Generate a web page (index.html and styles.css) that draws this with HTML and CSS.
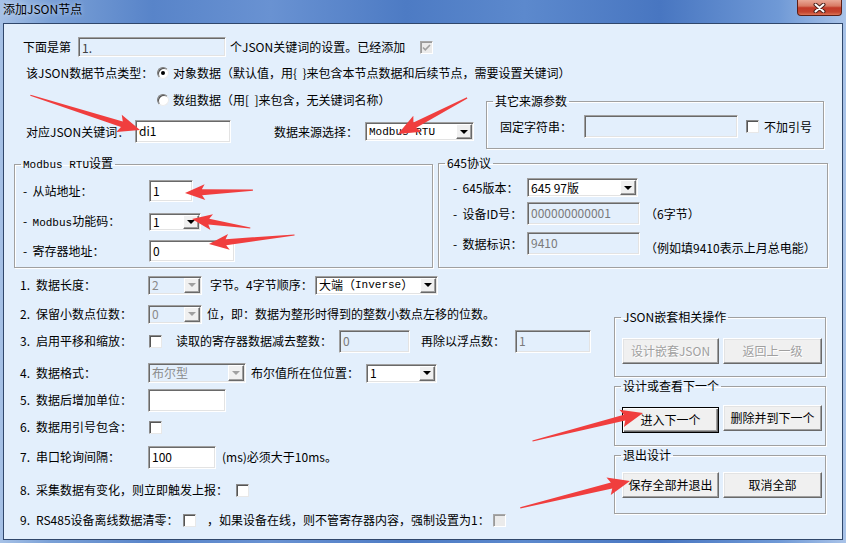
FILE: index.html
```html
<!DOCTYPE html>
<html lang="zh-CN">
<head>
    <meta charset="UTF-8">
    <title>添加JSON节点</title>
    <link rel="stylesheet" href="styles.css">
</head>
<body>
<div class="window">
    <div class="titlebar">
        <span class="title">添加JSON节点</span>
        <div class="close">
            <svg width="13" height="10" viewBox="0 0 13 10">
                <path d="M2.5 1.5 L10.5 8.5 M10.5 1.5 L2.5 8.5" stroke="#4a1f18" stroke-width="4" stroke-linecap="round"/>
                <path d="M2.5 1.5 L10.5 8.5 M10.5 1.5 L2.5 8.5" stroke="#fff" stroke-width="2" stroke-linecap="round"/>
            </svg>
        </div>
    </div>

    <div class="client">
        <div class="row head-row">
            <span class="lbl w55">下面是第</span>
            <div class="edit off dark w148 h20">1.</div>
            <span class="lbl w190 ml4">个JSON关键词的设置。已经添加</span>
            <span class="check off">
                <svg width="11" height="11" viewBox="0 0 11 11"><path d="M2 5.5 L4.3 7.8 L9 3" fill="none" stroke="#a0a0a0" stroke-width="1.6"/></svg>
            </span>
        </div>

        <div class="row type-row">
            <span class="lbl w131">该JSON数据节点类型：</span>
            <span class="radio on"></span>
            <span class="radio-text">对象数据（默认值，用{&nbsp;&nbsp;}来包含本节点数据和后续节点，需要设置关键词）</span>
        </div>

        <div class="top-split">
            <div class="top-left">
                <div class="row array-row">
                    <span class="radio"></span>
                    <span class="radio-text">数组数据（用[&nbsp;&nbsp;]来包含，无关键词名称）</span>
                </div>
                <div class="row key-row">
                    <span class="lbl w109">对应JSON关键词：</span>
                    <div class="edit w96 h23">di1</div>
                    <span class="lbl w91 ml43">数据来源选择：</span>
                    <div class="combo w109 h19"><span class="val latin">Modbus RTU</span><span class="drop"></span></div>
                </div>
            </div>
            <fieldset class="group other-src">
                <legend>其它来源参数</legend>
                <div class="row">
                    <span class="lbl w84">固定字符串：</span>
                    <div class="edit off w154 h23"></div>
                    <span class="check ml8"></span>
                    <span class="lbl ml5">不加引号</span>
                </div>
            </fieldset>
        </div>

        <div class="mid-split">
            <fieldset class="group modbus">
                <legend><span class="latin">Modbus RTU</span>设置</legend>
                <div class="row">
                    <span class="lbl w126">-&nbsp; 从站地址：</span>
                    <div class="edit w44 h22">1</div>
                </div>
                <div class="row gap11">
                    <span class="lbl w126">-&nbsp; <span class="latin">Modbus</span>功能码：</span>
                    <div class="combo w52 h18"><span class="val">1</span><span class="drop"></span></div>
                </div>
                <div class="row gap9">
                    <span class="lbl w126">-&nbsp; 寄存器地址：</span>
                    <div class="edit w86 h22">0</div>
                </div>
            </fieldset>
            <fieldset class="group proto645">
                <legend>645协议</legend>
                <div class="row">
                    <span class="lbl w74">-&nbsp; 645版本：</span>
                    <div class="combo w111 h19"><span class="val">645 97版</span><span class="drop"></span></div>
                </div>
                <div class="row gap5">
                    <span class="lbl w74">-&nbsp; 设备ID号：</span>
                    <div class="edit off w113 h23">000000000001</div>
                    <span class="lbl ml5">（6字节）</span>
                </div>
                <div class="row gap7">
                    <span class="lbl w74">-&nbsp; 数据标识：</span>
                    <div class="edit off w113 h23">9410</div>
                    <span class="lbl ml5 low">（例如填9410表示上月总电能）</span>
                </div>
            </fieldset>
        </div>

        <div class="bottom-split">
            <div class="options">
                <div class="row opt mt5">
                    <span class="num">1.</span><span class="lbl w112">数据长度：</span>
                    <div class="combo off w54 h19"><span class="val">2</span><span class="drop"></span></div>
                    <span class="lbl w105 ml8">字节。4字节顺序：</span>
                    <div class="combo w123 h19"><span class="val">大端（<span class="latin">Inverse</span>）</span><span class="drop"></span></div>
                </div>
                <div class="row opt mt5">
                    <span class="num">2.</span><span class="lbl w112">保留小数点位数：</span>
                    <div class="combo off w54 h19"><span class="val">0</span><span class="drop"></span></div>
                    <span class="lbl ml5">位，即：数据为整形时得到的整数小数点左移的位数。</span>
                </div>
                <div class="row opt mt3">
                    <span class="num">3.</span><span class="lbl w112">启用平移和缩放：</span>
                    <span class="check ml1"></span>
                    <span class="lbl w163 ml14">读取的寄存器数据减去整数：</span>
                    <div class="edit off w71 h23">0</div>
                    <span class="lbl w94 ml11">再除以浮点数：</span>
                    <div class="edit off w76 h23">1</div>
                </div>
                <div class="row opt mt8">
                    <span class="num">4.</span><span class="lbl w112">数据格式：</span>
                    <div class="combo off w98 h20"><span class="val">布尔型</span><span class="drop"></span></div>
                    <span class="lbl w115 ml5">布尔值所在位位置：</span>
                    <div class="combo w71 h19"><span class="val">1</span><span class="drop"></span></div>
                </div>
                <div class="row opt mt3">
                    <span class="num">5.</span><span class="lbl w112">数据后增加单位：</span>
                    <div class="edit w78 h23"></div>
                </div>
                <div class="row opt mt3">
                    <span class="num">6.</span><span class="lbl w112">数据用引号包含：</span>
                    <span class="check ml1"></span>
                </div>
                <div class="row opt mt6">
                    <span class="num">7.</span><span class="lbl w112">串口轮询间隔：</span>
                    <div class="edit w68 h23">100</div>
                    <span class="lbl ml6">(ms)必须大于10ms。</span>
                </div>
                <div class="row opt mt9">
                    <span class="num">8.</span><span class="lbl w200">采集数据有变化，则立即触发上报：</span>
                    <span class="check"></span>
                </div>
                <div class="row opt mt6">
                    <span class="num">9.</span><span class="lbl w147">RS485设备离线数据清零：</span>
                    <span class="check"></span>
                    <span class="lbl w286 ml11">，如果设备在线，则不管寄存器内容，强制设置为1：</span>
                    <span class="check off"></span>
                </div>
            </div>

            <div class="actions">
                <fieldset class="group act json-ops">
                    <legend>JSON嵌套相关操作</legend>
                    <div class="btns">
                        <span class="btn off w97">设计嵌套JSON</span>
                        <span class="btn off w99">返回上一级</span>
                    </div>
                </fieldset>
                <fieldset class="group act next-ops">
                    <legend>设计或查看下一个</legend>
                    <div class="btns">
                        <span class="btn default w97">进入下一个</span>
                        <span class="btn w99">删除并到下一个</span>
                    </div>
                </fieldset>
                <fieldset class="group act exit-ops">
                    <legend>退出设计</legend>
                    <div class="btns">
                        <span class="btn w97">保存全部并退出</span>
                        <span class="btn w99">取消全部</span>
                    </div>
                </fieldset>
            </div>
        </div>
    </div>

    <!-- annotation arrows drawn over the dialog -->
    <svg class="marks" width="846" height="543" viewBox="0 0 846 543">
        <g fill="#f03e3e">
            <path transform="translate(140 130) rotate(17.6)" d="M0 0 L-22 -9 L-19 -3 L-115 -0.6 L-115 0.6 L-19 3 L-22 9 Z"/>
            <path transform="translate(398 134) rotate(152.4)" d="M0 0 L-22 -9 L-19 -3 L-78 -0.6 L-78 0.6 L-19 3 L-22 9 Z"/>
            <path transform="translate(185 193) rotate(177.5)" d="M0 0 L-20 -8 L-17 -3 L-68 -0.6 L-68 0.6 L-17 3 L-20 8 Z"/>
            <path transform="translate(192 219) rotate(-171.2)" d="M0 0 L-20 -8 L-17 -3 L-59 -0.6 L-59 0.6 L-17 3 L-20 8 Z"/>
            <path transform="translate(209 244) rotate(174)" d="M0 0 L-20 -8 L-17 -3 L-86 -0.6 L-86 0.6 L-17 3 L-20 8 Z"/>
            <path transform="translate(643 413) rotate(-14.2)" d="M0 0 L-22 -9 L-19 -3 L-114 -0.6 L-114 0.6 L-19 3 L-22 9 Z"/>
            <path transform="translate(630 481) rotate(-13.8)" d="M0 0 L-22 -9 L-19 -3 L-113 -0.6 L-113 0.6 L-19 3 L-22 9 Z"/>
        </g>
    </svg>
</div>
</body>
</html>
```

FILE: styles.css
```css
* {
    margin: 0;
    padding: 0;
    box-sizing: border-box;
}
html, body {
    width: 846px;
    height: 543px;
    overflow: hidden;
}
body {
    font-family: "Noto Sans CJK SC", sans-serif;
    font-size: 12px;
    line-height: 14px;
    color: #000;
    background: #6f97d1;
}
.latin {
    font-family: "Liberation Mono", monospace;
    font-size: 11px;
}

/* window frame */
.window {
    position: relative;
    width: 846px;
    height: 543px;
    display: flex;
    flex-direction: column;
    padding: 0 3px 3px 3px;
    background: linear-gradient(to right, #a6c1e6 0%, #7aa0d6 6%, #5884c9 18%, #6992d2 32%, #4d7bc4 48%, #5c89cd 62%, #4876c1 78%, #6f99d6 92%, #a9c3e8 100%);
}
.titlebar {
    height: 23px;
    display: flex;
    align-items: flex-start;
    flex: none;
}
.title {
    line-height: 18px;
    text-shadow: 0 0 5px rgba(255, 255, 255, 0.7);
}
.close {
    margin-left: auto;
    margin-right: 1px;
    width: 45px;
    height: 16px;
    display: flex;
    align-items: center;
    justify-content: center;
    border: 1px solid #5c1e15;
    border-top: none;
    border-radius: 0 0 4px 4px;
    background: linear-gradient(#e9a896 0%, #d87a64 40%, #c23a28 52%, #c4432e 80%, #dc7456 100%);
}
.client {
    flex: 1;
    border: 1px solid #30476b;
    background: #e3effc;
}

/* rows */
.row {
    display: flex;
    align-items: center;
}
.lbl {
    flex: none;
    white-space: nowrap;
}
.radio-text {
    white-space: nowrap;
    margin-left: 4px;
}
.head-row {
    margin-top: 13px;
    height: 20px;
    padding-left: 19px;
}
.type-row {
    margin-top: 6px;
    height: 20px;
    padding-left: 22px;
}
.top-split {
    display: flex;
    margin-top: 7px;
}
.top-left {
    width: 482px;
    flex: none;
}
.array-row {
    height: 20px;
    padding-left: 153px;
}
.key-row {
    margin-top: 10px;
    height: 23px;
    padding-left: 22px;
}

/* group boxes: the legend sits at the fieldset's left padding, so the
   horizontal inset goes on the rows instead */
.group {
    border: 1px solid #a0a0a0;
    box-shadow: 1px 1px 0 #fff, inset 1px 1px 0 #fff;
    min-width: 0;
    flex: none;
}
.group legend {
    margin-left: 6px;
    padding: 0 2px;
    line-height: 14px;
}
.other-src {
    width: 338px;
    margin-top: 4px;
    padding: 7px 0 10px 0;
}
.other-src .row { padding-left: 13px; }
.mid-split {
    display: flex;
    margin-top: 7px;
}
.modbus {
    width: 419px;
    margin-left: 10px;
    padding: 8px 0 5px 0;
}
.modbus .row { padding-left: 8px; }
.proto645 {
    width: 390px;
    margin-left: 5px;
    padding: 8px 0 10px 0;
}
.proto645 .row { padding-left: 14px; }
.gap5 { margin-top: 5px; }
.gap7 { margin-top: 7px; }
.gap9 { margin-top: 9px; }
.gap11 { margin-top: 11px; }
.low { margin-top: 8px; }

/* bottom area */
.bottom-split {
    display: flex;
}
.options {
    width: 610px;
    flex: none;
}
.opt {
    height: 24px;
    padding-left: 16px;
}
.num {
    width: 16px;
    flex: none;
}
.mt3 { margin-top: 3px; }
.mt5 { margin-top: 5px; }
.mt6 { margin-top: 6px; }
.mt8 { margin-top: 8px; }
.mt9 { margin-top: 9px; }

.actions {
    width: 212px;
    flex: none;
}
.act {
    width: 212px;
}
.json-ops {
    margin-top: 42px;
    padding-top: 14px;
    padding-bottom: 12px;
}
.next-ops {
    margin-top: 2px;
    padding-top: 12px;
    padding-bottom: 12px;
}
.exit-ops {
    margin-top: 2px;
    padding-top: 10px;
    padding-bottom: 15px;
}
.btns {
    display: flex;
    align-items: flex-start;
    gap: 4px;
    padding-left: 7px;
}

/* controls */
.edit, .combo {
    flex: none;
    border: 1px solid;
    border-color: #a0a0a0 #fff #fff #a0a0a0;
    box-shadow: inset 1px 1px 0 #696969, inset -1px -1px 0 #e3e3e3;
    background: #fff;
}
.edit {
    padding: 3px 0 0 3px;
    white-space: nowrap;
    overflow: hidden;
}
.edit.off {
    background: #e3effc;
    color: #7a7a7a;
}
.edit.dark {
    color: #404040;
}
.combo {
    display: flex;
    padding: 1px;
}
.combo .val {
    flex: 1;
    display: flex;
    align-items: center;
    padding-left: 2px;
    white-space: nowrap;
}
.combo .drop {
    width: 16px;
    flex: none;
    display: flex;
    align-items: center;
    justify-content: center;
    background: #f0f0f0;
    border: 1px solid;
    border-color: #fff #696969 #696969 #fff;
    box-shadow: inset -1px -1px 0 #a0a0a0;
}
.combo .drop::after {
    content: "";
    border-left: 4px solid transparent;
    border-right: 4px solid transparent;
    border-top: 4px solid #000;
}
.combo.off {
    background: #e3effc;
    color: #8a8a8a;
}
.combo.off .drop::after {
    border-top-color: #a0a0a0;
}
.check {
    flex: none;
    width: 13px;
    height: 13px;
    display: flex;
    align-items: center;
    justify-content: center;
    border: 1px solid;
    border-color: #8a8a8a #e8e8e8 #e8e8e8 #8a8a8a;
    box-shadow: inset 1px 1px 0 #555;
    background: #fff;
}
.check.off {
    background: #ebebeb;
    border-color: #a8a8a8 #fff #fff #a8a8a8;
    box-shadow: inset 1px 1px 0 #9a9a9a;
}
.radio {
    flex: none;
    width: 12px;
    height: 12px;
    border-radius: 50%;
    display: flex;
    align-items: center;
    justify-content: center;
    border: 1px solid;
    border-color: #7a7a7a #ececec #ececec #7a7a7a;
    box-shadow: inset 1px 1px 0 #505050;
    background: #fff;
}
.radio.on::after {
    content: "";
    width: 4px;
    height: 4px;
    border-radius: 50%;
    background: #000;
}
.btn {
    flex: none;
    height: 26px;
    display: flex;
    align-items: center;
    justify-content: center;
    white-space: nowrap;
    background: #f0f0f0;
    border: 1px solid;
    border-color: #fff #696969 #696969 #fff;
    box-shadow: inset -1px -1px 0 #a0a0a0, inset 1px 1px 0 #e3e3e3;
}
.btn.default {
    margin-top: 2px;
    border-color: #000;
    box-shadow: inset 1px 1px 0 #fff, inset -1px -1px 0 #696969, inset -2px -2px 0 #a0a0a0;
}
.btn.off {
    color: #a0a0a0;
    text-shadow: 1px 1px 0 #fff;
}

.marks {
    position: absolute;
    top: 0;
    left: 0;
    pointer-events: none;
}

/* sizes */
.w44 { width: 44px; }
.w52 { width: 52px; }
.w54 { width: 54px; }
.w55 { width: 55px; }
.w68 { width: 68px; }
.w71 { width: 71px; }
.w74 { width: 74px; }
.w76 { width: 76px; }
.w78 { width: 78px; }
.w84 { width: 84px; }
.w86 { width: 86px; }
.w91 { width: 91px; }
.w94 { width: 94px; }
.w96 { width: 96px; }
.w97 { width: 97px; }
.w98 { width: 98px; }
.w99 { width: 99px; }
.w105 { width: 105px; }
.w109 { width: 109px; }
.w111 { width: 111px; }
.w112 { width: 112px; }
.w113 { width: 113px; }
.w115 { width: 115px; }
.w123 { width: 123px; }
.w126 { width: 126px; }
.w131 { width: 131px; }
.w147 { width: 147px; }
.w148 { width: 148px; }
.w154 { width: 154px; }
.w163 { width: 163px; }
.w190 { width: 190px; }
.w200 { width: 200px; }
.w286 { width: 286px; }
.h18 { height: 18px; }
.h19 { height: 19px; }
.h20 { height: 20px; }
.h22 { height: 22px; }
.h23 { height: 23px; }
.ml1 { margin-left: 1px; }
.ml4 { margin-left: 4px; }
.ml5 { margin-left: 5px; }
.ml6 { margin-left: 6px; }
.ml8 { margin-left: 8px; }
.ml11 { margin-left: 11px; }
.ml14 { margin-left: 14px; }
.ml43 { margin-left: 43px; }
```
